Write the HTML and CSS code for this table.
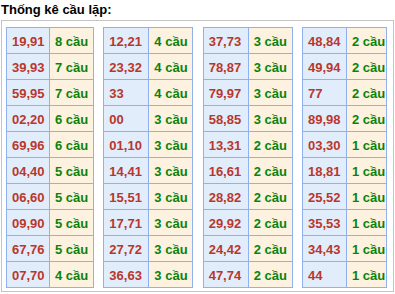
FILE: index.html
```html
<!DOCTYPE html>
<html>
<head>
<meta charset="utf-8">
<link rel="stylesheet" href="styles.css">
</head>
<body>
<div class="title">Thống kê cầu lặp:</div>
<div class="box">
  <div class="tbl t1">
    <div class="n">19,91</div><div class="c">8 cầu</div>
    <div class="n">39,93</div><div class="c">7 cầu</div>
    <div class="n">59,95</div><div class="c">7 cầu</div>
    <div class="n">02,20</div><div class="c">6 cầu</div>
    <div class="n">69,96</div><div class="c">6 cầu</div>
    <div class="n">04,40</div><div class="c">5 cầu</div>
    <div class="n">06,60</div><div class="c">5 cầu</div>
    <div class="n">09,90</div><div class="c">5 cầu</div>
    <div class="n">67,76</div><div class="c">5 cầu</div>
    <div class="n">07,70</div><div class="c">4 cầu</div>
  </div>
  <div class="tbl t2">
    <div class="n">12,21</div><div class="c">4 cầu</div>
    <div class="n">23,32</div><div class="c">4 cầu</div>
    <div class="n">33</div><div class="c">4 cầu</div>
    <div class="n">00</div><div class="c">3 cầu</div>
    <div class="n">01,10</div><div class="c">3 cầu</div>
    <div class="n">14,41</div><div class="c">3 cầu</div>
    <div class="n">15,51</div><div class="c">3 cầu</div>
    <div class="n">17,71</div><div class="c">3 cầu</div>
    <div class="n">27,72</div><div class="c">3 cầu</div>
    <div class="n">36,63</div><div class="c">3 cầu</div>
  </div>
  <div class="tbl t3">
    <div class="n">37,73</div><div class="c">3 cầu</div>
    <div class="n">78,87</div><div class="c">3 cầu</div>
    <div class="n">79,97</div><div class="c">3 cầu</div>
    <div class="n">58,85</div><div class="c">3 cầu</div>
    <div class="n">13,31</div><div class="c">2 cầu</div>
    <div class="n">16,61</div><div class="c">2 cầu</div>
    <div class="n">28,82</div><div class="c">2 cầu</div>
    <div class="n">29,92</div><div class="c">2 cầu</div>
    <div class="n">24,42</div><div class="c">2 cầu</div>
    <div class="n">47,74</div><div class="c">2 cầu</div>
  </div>
  <div class="tbl t4">
    <div class="n">48,84</div><div class="c">2 cầu</div>
    <div class="n">49,94</div><div class="c">2 cầu</div>
    <div class="n">77</div><div class="c">2 cầu</div>
    <div class="n">89,98</div><div class="c">2 cầu</div>
    <div class="n">03,30</div><div class="c">1 cầu</div>
    <div class="n">18,81</div><div class="c">1 cầu</div>
    <div class="n">25,52</div><div class="c">1 cầu</div>
    <div class="n">35,53</div><div class="c">1 cầu</div>
    <div class="n">34,43</div><div class="c">1 cầu</div>
    <div class="n">44</div><div class="c">1 cầu</div>
  </div>
</div>
</body>
</html>
```
FILE: styles.css
```css
html, body {
  margin: 0;
  padding: 0;
  background: #ffffff;
  font-family: "Liberation Sans", Arial, sans-serif;
}
.title {
  height: 20px;
  line-height: 20px;
  padding-left: 1px;
  font-size: 13px;
  font-weight: bold;
  color: #000000;
}
.box {
  box-sizing: border-box;
  margin-left: 1px;
  width: 393px;
  height: 272px;
  border: 1px solid #c4c4c4;
  padding: 6px 6px 4px 4px;
  display: flex;
  justify-content: space-between;
  align-items: flex-start;
}
.tbl {
  display: grid;
  border-top: 1px solid #8fb1ef;
  border-left: 1px solid #8fb1ef;
  font-size: 13px;
  font-weight: bold;
}
.t1 { grid-template-columns: 43px 44px; }
.t2 { grid-template-columns: 45px 44px; }
.t3 { grid-template-columns: 45px 44px; }
.t4 { grid-template-columns: 44px 40px; }
.n, .c {
  box-sizing: border-box;
  height: 26px;
  padding: 2px 0 0 5px;
  line-height: 23px;
  border-right: 1px solid #8fb1ef;
  border-bottom: 1px solid #8fb1ef;
  white-space: nowrap;
}
.n {
  background: #e2edfc;
  color: #b8372c;
}
.c {
  background: #fdf2df;
  color: #0a830a;
}
```
